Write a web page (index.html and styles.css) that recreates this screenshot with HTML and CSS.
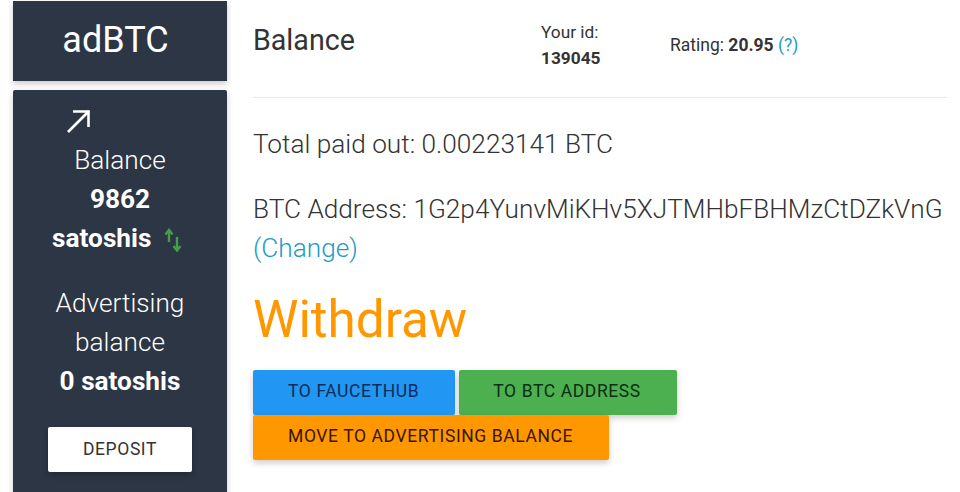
FILE: index.html
```html
<!DOCTYPE html>
<html lang="en">
<head>
  <meta charset="UTF-8">
  <meta name="viewport" content="width=device-width, initial-scale=1.0">
  <title>adBTC Balance</title>
  <link rel="stylesheet" href="styles.css">
</head>
<body>
  <div class="page">
    <div class="sidebar">
      <div class="logo">adBTC</div>
      <div class="panel">
        <div class="panel-icon">
          <svg width="26" height="26" viewBox="0 0 26 26" fill="none" stroke="#fff" stroke-width="2.6">
            <path d="M2 24 L23 3"/>
            <path d="M7 3.5 H22.5 V19"/>
          </svg>
        </div>
        <div class="panel-line">Balance</div>
        <div class="panel-line strong">9862</div>
        <div class="panel-line strong shifted">satoshis
          <svg class="swap" width="18" height="24" viewBox="0 0 18 24" fill="none" stroke="#43a047" stroke-width="2.4">
            <path d="M5 14 V3"/>
            <path d="M1.5 6.500 L5 2 L8.500 6.500"/>
            <path d="M13 9 V22"/>
            <path d="M9.500 18 L13 22.500 L16.500 18"/>
          </svg>
        </div>
        <div class="panel-line gap">Advertising</div>
        <div class="panel-line">balance</div>
        <div class="panel-line strong">0 satoshis</div>
        <button class="deposit">DEPOSIT</button>
      </div>
    </div>

    <div class="content">
      <div class="header">
        <h2>Balance</h2>
        <div class="your-id">Your id:<br><b>139045</b></div>
        <div class="rating">Rating: <b>20.95</b> <a href="#">(?)</a></div>
      </div>
      <p class="info first">Total paid out: 0.00223141 BTC</p>
      <p class="info">BTC Address: 1G2p4YunvMiKHv5XJTMHbFBHMzCtDZkVnG <a href="#">(Change)</a></p>
      <h1>Withdraw</h1>
      <div class="buttons">
        <button class="btn blue">TO FAUCETHUB</button>
        <button class="btn green">TO BTC ADDRESS</button>
        <button class="btn orange">MOVE TO ADVERTISING BALANCE</button>
      </div>
    </div>
  </div>
</body>
</html>
```

FILE: styles.css
```css
html, body { height: 100%; }
body { margin: 0; background: #fff; font-family: Roboto, Arial, sans-serif; color: #333; overflow: hidden; }
a { color: #1e9bc7; text-decoration: none; }
.page { display: flex; height: 492px; overflow: hidden; }

.sidebar { width: 214px; margin-left: 13px; flex-shrink: 0; }
.logo { height: 80px; margin-top: 1px; padding-right: 9px; background: #2c3645; color: #fff; font-size: 36px; line-height: 79px; text-align: center; box-shadow: 0 3px 6px rgba(0,0,0,.2); box-sizing: border-box; }
.panel { margin-top: 9px; height: 420px; padding-top: 18px; background: #2c3645; color: #fff; border-radius: 2px; text-align: center; box-shadow: 0 3px 6px rgba(0,0,0,.2); box-sizing: border-box; }
.panel-icon { height: 26px; padding-left: 53px; text-align: left; margin-bottom: 7px; }
.panel-line { font-size: 26.2px; font-weight: 300; line-height: 39px; }
.panel-line.strong { font-weight: 700; }
.panel-line.shifted { padding-right: 6px; }
.panel-line.gap { margin-top: 26px; }
.swap { vertical-align: -5px; margin-left: 6px; }
.deposit { display: block; margin: 26px auto 0; padding-bottom: 3px; width: 144px; height: 45px; background: #fff; color: #333; border: 0; border-radius: 2px; font-family: Roboto, Arial, sans-serif; font-size: 17.5px; letter-spacing: 0.6px; box-shadow: 0 3px 6px rgba(0,0,0,.25); }

.content { margin-left: 26px; width: 694px; }
.header { display: flex; height: 98px; border-bottom: 1px solid #e8e8e8; box-sizing: border-box; }
.header h2 { margin: 21px 0 0; width: 288px; font-size: 28.6px; font-weight: 400; line-height: 38px; }
.your-id { margin-top: 19px; width: 129px; font-size: 17.3px; line-height: 26px; }
.rating { margin-top: 31px; font-size: 17.5px; line-height: 28px; }
.info { margin: 0; font-size: 26.2px; font-weight: 300; line-height: 39px; }
.info.first { margin: 27px 0 26px; }
h1 { margin: 18px 0 16px; font-size: 51.2px; font-weight: 400; line-height: 68px; color: #ff9800; }
.buttons { display: flex; flex-wrap: wrap; column-gap: 4px; width: 500px; }
.btn { height: 45px; border: 0; border-radius: 2px; font-family: Roboto, Arial, sans-serif; font-size: 17.5px; letter-spacing: 0.6px; color: #1a1a1a; padding: 0 36px 4px 35px; box-shadow: 0 3px 6px rgba(0,0,0,.2); }
.blue { background: #2196f3; color: #0d2c5c; }
.green { background: #4caf50; color: #0c2e10; padding-left: 34px; }
.orange { background: #ff9800; color: #3a1500; }
```
